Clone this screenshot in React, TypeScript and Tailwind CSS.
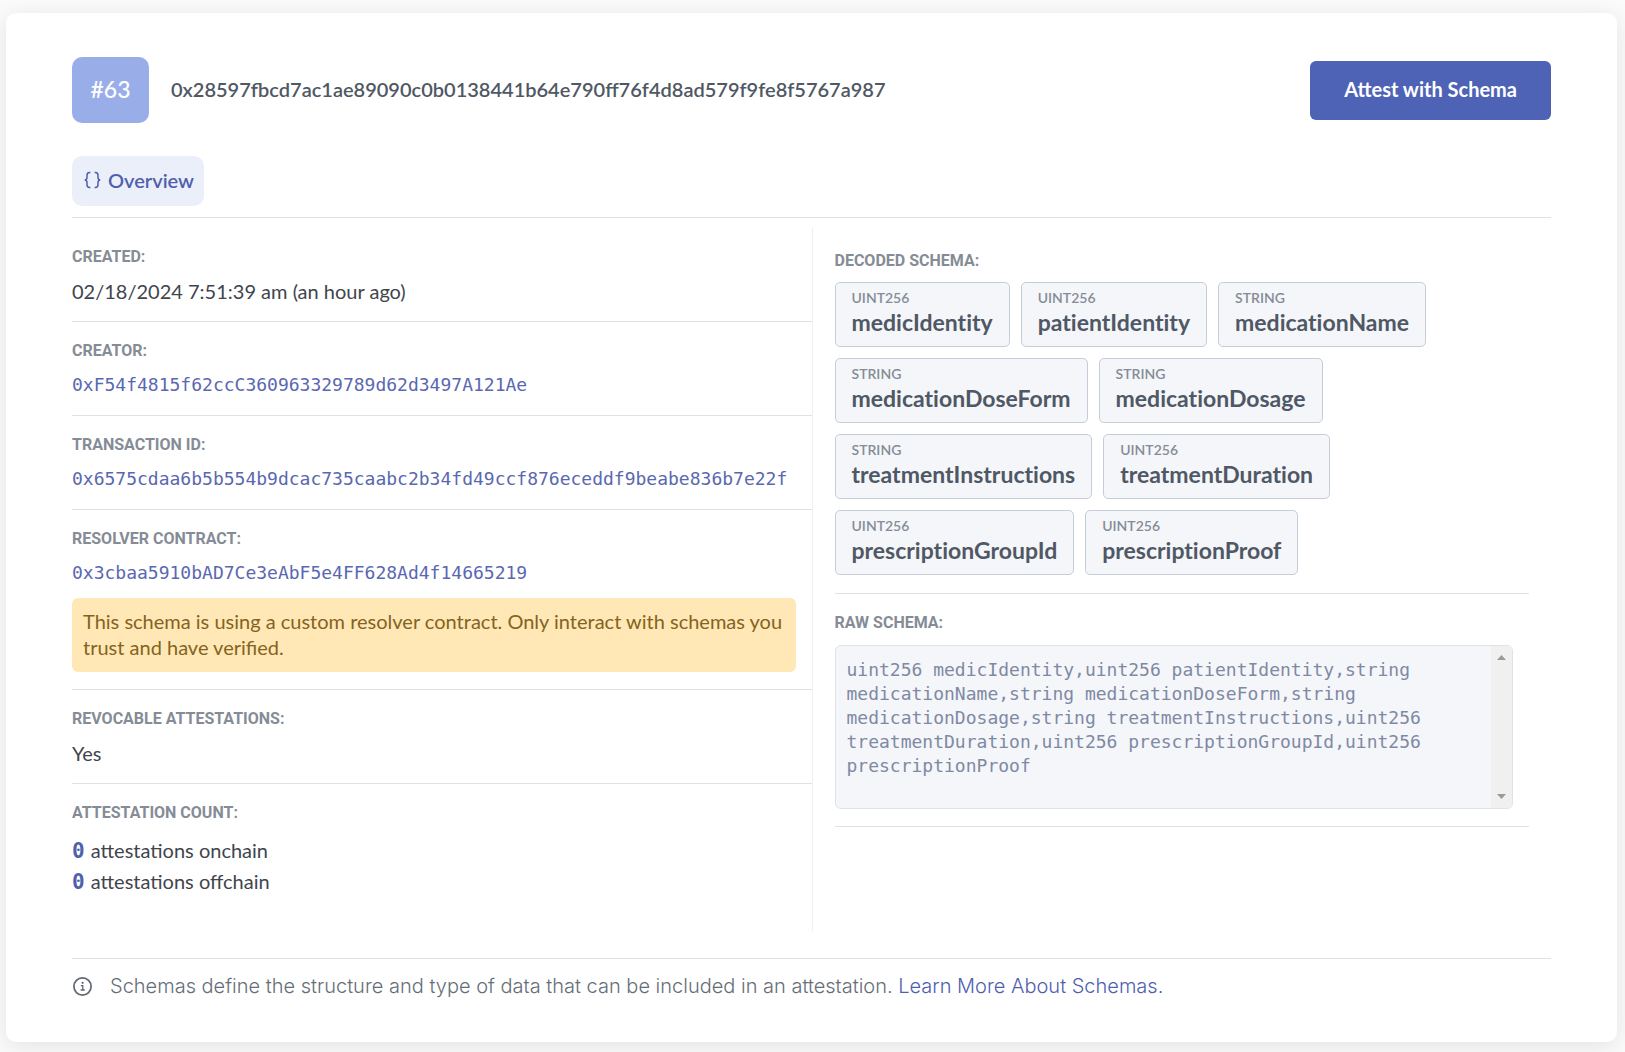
import React from "react";

const sans = "font-['Lato','Open_Sans',sans-serif]";
const mono = "font-['DejaVu_Sans_Mono',monospace]";
const label = "font-['Roboto',sans-serif] text-[16px] leading-[26px] font-bold text-[#858c96] uppercase";

const fields = [
  { type: "uint256", name: "medicIdentity" },
  { type: "uint256", name: "patientIdentity" },
  { type: "string", name: "medicationName" },
  { type: "string", name: "medicationDoseForm" },
  { type: "string", name: "medicationDosage" },
  { type: "string", name: "treatmentInstructions" },
  { type: "uint256", name: "treatmentDuration" },
  { type: "uint256", name: "prescriptionGroupId" },
  { type: "uint256", name: "prescriptionProof" },
];

function Row({ title, children }: { title: string; children: React.ReactNode }) {
  return (
    <section className="flex flex-col gap-[7px] border-b border-[#dee2e6] py-4 last:border-b-0">
      <h2 className={label}>{title}</h2>
      {children}
    </section>
  );
}

function HexLink({ value }: { value: string }) {
  return (
    <a href="#" className={`${mono} text-[18px] leading-7 text-[#5a68b0]`}>
      {value}
    </a>
  );
}

function BracesIcon() {
  return (
    <svg width="17" height="18" viewBox="0 0 17 18" fill="none" stroke="currentColor" strokeWidth="1.5" aria-hidden="true">
      <path d="M6.4 1.6H5.6C4 1.6 3 2.5 3 4.2V6.6C3 8 2.3 8.8 .8 9C2.3 9.2 3 10 3 11.4V13.8C3 15.5 4 16.4 5.6 16.4H6.4" />
      <path d="M10.6 1.6H11.4C13 1.6 14 2.5 14 4.2V6.6C14 8 14.7 8.8 16.2 9C14.7 9.2 14 10 14 11.4V13.8C14 15.5 13 16.4 11.4 16.4H10.6" />
    </svg>
  );
}

function InfoIcon() {
  return (
    <svg width="20" height="20" viewBox="0 0 20 20" fill="none" stroke="#5f6770" aria-hidden="true">
      <circle cx="10.5" cy="10.5" r="8.6" strokeWidth="1.7" />
      <path d="M8.8 9.6H10.8V14M8.6 14H12.8" strokeWidth="1.3" />
      <circle cx="10.6" cy="6.8" r="1.1" fill="#5f6770" stroke="none" />
    </svg>
  );
}

export default function App() {
  return (
    <div className={`${sans} min-h-screen bg-[#fbfbfb] pt-[13px] pr-2 pb-2.5 pl-1.5 text-[#3f454c]`}>
      <main className="rounded-[10px] bg-white px-[66px] pt-11 pb-10 shadow-[0_4px_24px_rgba(0,0,0,0.1)]">
        <header className="flex items-center justify-between">
          <div className="flex items-center gap-[22px]">
            <div className="flex h-[66px] w-[77px] items-center justify-center rounded-[10px] bg-[#99aee9] pb-0.5 text-[23px] font-medium text-white">#63</div>
            <h1 className="pb-0.5 text-[20px] font-semibold text-[#4f5864]">0x28597fbcd7ac1ae89090c0b0138441b64e790ff76f4d8ad579f9fe8f5767a987</h1>
          </div>
          <button type="button" className="h-[59px] rounded-md bg-[#4e63b6] px-[34px] pb-0.5 text-[20px] font-bold text-white">
            Attest with Schema
          </button>
        </header>

        <nav className="mt-[33px] border-b border-[#dee2e6] pb-[11px]">
          <button type="button" className="flex h-[50px] items-center gap-[7px] rounded-[10px] bg-[#ebeffa] pr-2.5 pb-0.5 pl-3 text-[20px] font-semibold text-[#4f5fad]">
            <BracesIcon />
            Overview
          </button>
        </nav>

        <div className="mt-2.5 grid grid-cols-2">
          <div className="pb-[18px]">
            <Row title="Created:">
              <p className="text-[20px] leading-7">02/18/2024 7:51:39 am (an hour ago)</p>
            </Row>
            <Row title="Creator:">
              <HexLink value="0xF54f4815f62ccC360963329789d62d3497A121Ae" />
            </Row>
            <Row title="Transaction ID:">
              <HexLink value="0x6575cdaa6b5b554b9dcac735caabc2b34fd49ccf876eceddf9beabe836b7e22f" />
            </Row>
            <Row title="Resolver contract:">
              <HexLink value="0x3cbaa5910bAD7Ce3eAbF5e4FF628Ad4f14665219" />
              <p role="alert" className="mt-1 mr-4 mb-px rounded-md bg-[#ffe8b5] pt-2.5 pr-2 pb-3 pl-[11px] text-[20px] leading-[26px] text-[#846322]">
                This schema is using a custom resolver contract. Only interact with schemas you trust and have verified.
              </p>
            </Row>
            <Row title="Revocable attestations:">
              <p className="text-[20px] leading-7">Yes</p>
            </Row>
            <Row title="Attestation count:">
              <div className="mt-0.5 text-[20px] leading-[30px]">
                <p className="flex items-baseline gap-1.5">
                  <b className={`${mono} text-[21px] text-[#4f5fad]`}>0</b> attestations onchain
                </p>
                <p className="flex items-baseline gap-1.5">
                  <b className={`${mono} text-[21px] text-[#4f5fad]`}>0</b> attestations offchain
                </p>
              </div>
            </Row>
          </div>

          <div className="border-l border-[#eeeff1] px-[22px] pt-5">
            <section className="border-b border-[#dee2e6] pb-[18px]">
              <h2 className={label}>Decoded schema:</h2>
              <ul className="mt-2 flex flex-wrap gap-[11px]">
                {fields.map((f) => (
                  <li key={f.name} className="rounded-[5px] border border-[#c6cdd8] bg-[#f4f6fa] px-4 pt-1.5 pb-[9px]">
                    <div className="text-[14px] leading-[18px] font-semibold text-[#858c96] uppercase">{f.type}</div>
                    <div className="text-[23px] leading-[30px] font-bold text-[#4f5864] [font-variant-ligatures:none]">{f.name}</div>
                  </li>
                ))}
              </ul>
            </section>
            <section className="border-b border-[#dee2e6] pt-4 pb-[17px]">
              <label htmlFor="raw-schema" className={`${label} block`}>
                Raw schema:
              </label>
              <div className="mt-[9px] mr-4 flex h-[164px] overflow-hidden rounded-md border border-[#dfe3e8] bg-[#f4f6fa]">
                <textarea
                  id="raw-schema"
                  readOnly
                  className={`${mono} min-w-0 flex-1 resize-none bg-transparent px-[11px] py-3 text-[18px] leading-6 text-[#8089a3] outline-none`}
                  value="uint256 medicIdentity,uint256 patientIdentity,string medicationName,string medicationDoseForm,string medicationDosage,string treatmentInstructions,uint256 treatmentDuration,uint256 prescriptionGroupId,uint256 prescriptionProof"
                />
                <div className="flex w-[21px] flex-col items-center justify-between bg-[#f0f0f0] py-[9px]" aria-hidden="true">
                  <svg width="9" height="5" viewBox="0 0 9 5" fill="#9b9b9b">
                    <path d="M0 5L4.5 0L9 5Z" />
                  </svg>
                  <svg width="9" height="5" viewBox="0 0 9 5" fill="#9b9b9b">
                    <path d="M0 0L4.5 5L9 0Z" />
                  </svg>
                </div>
              </div>
            </section>
          </div>
        </div>

        <footer className="mt-[27px] flex items-center gap-[18px] border-t border-[#dee2e6] pt-[11px] font-['Inter',sans-serif] text-[20px] leading-8 font-light text-[#656e78]">
          <InfoIcon />
          <p>
            Schemas define the structure and type of data that can be included in an attestation.{" "}
            <a href="#" className="text-[#4f5fad]">
              Learn More About Schemas.
            </a>
          </p>
        </footer>
      </main>
    </div>
  );
}
